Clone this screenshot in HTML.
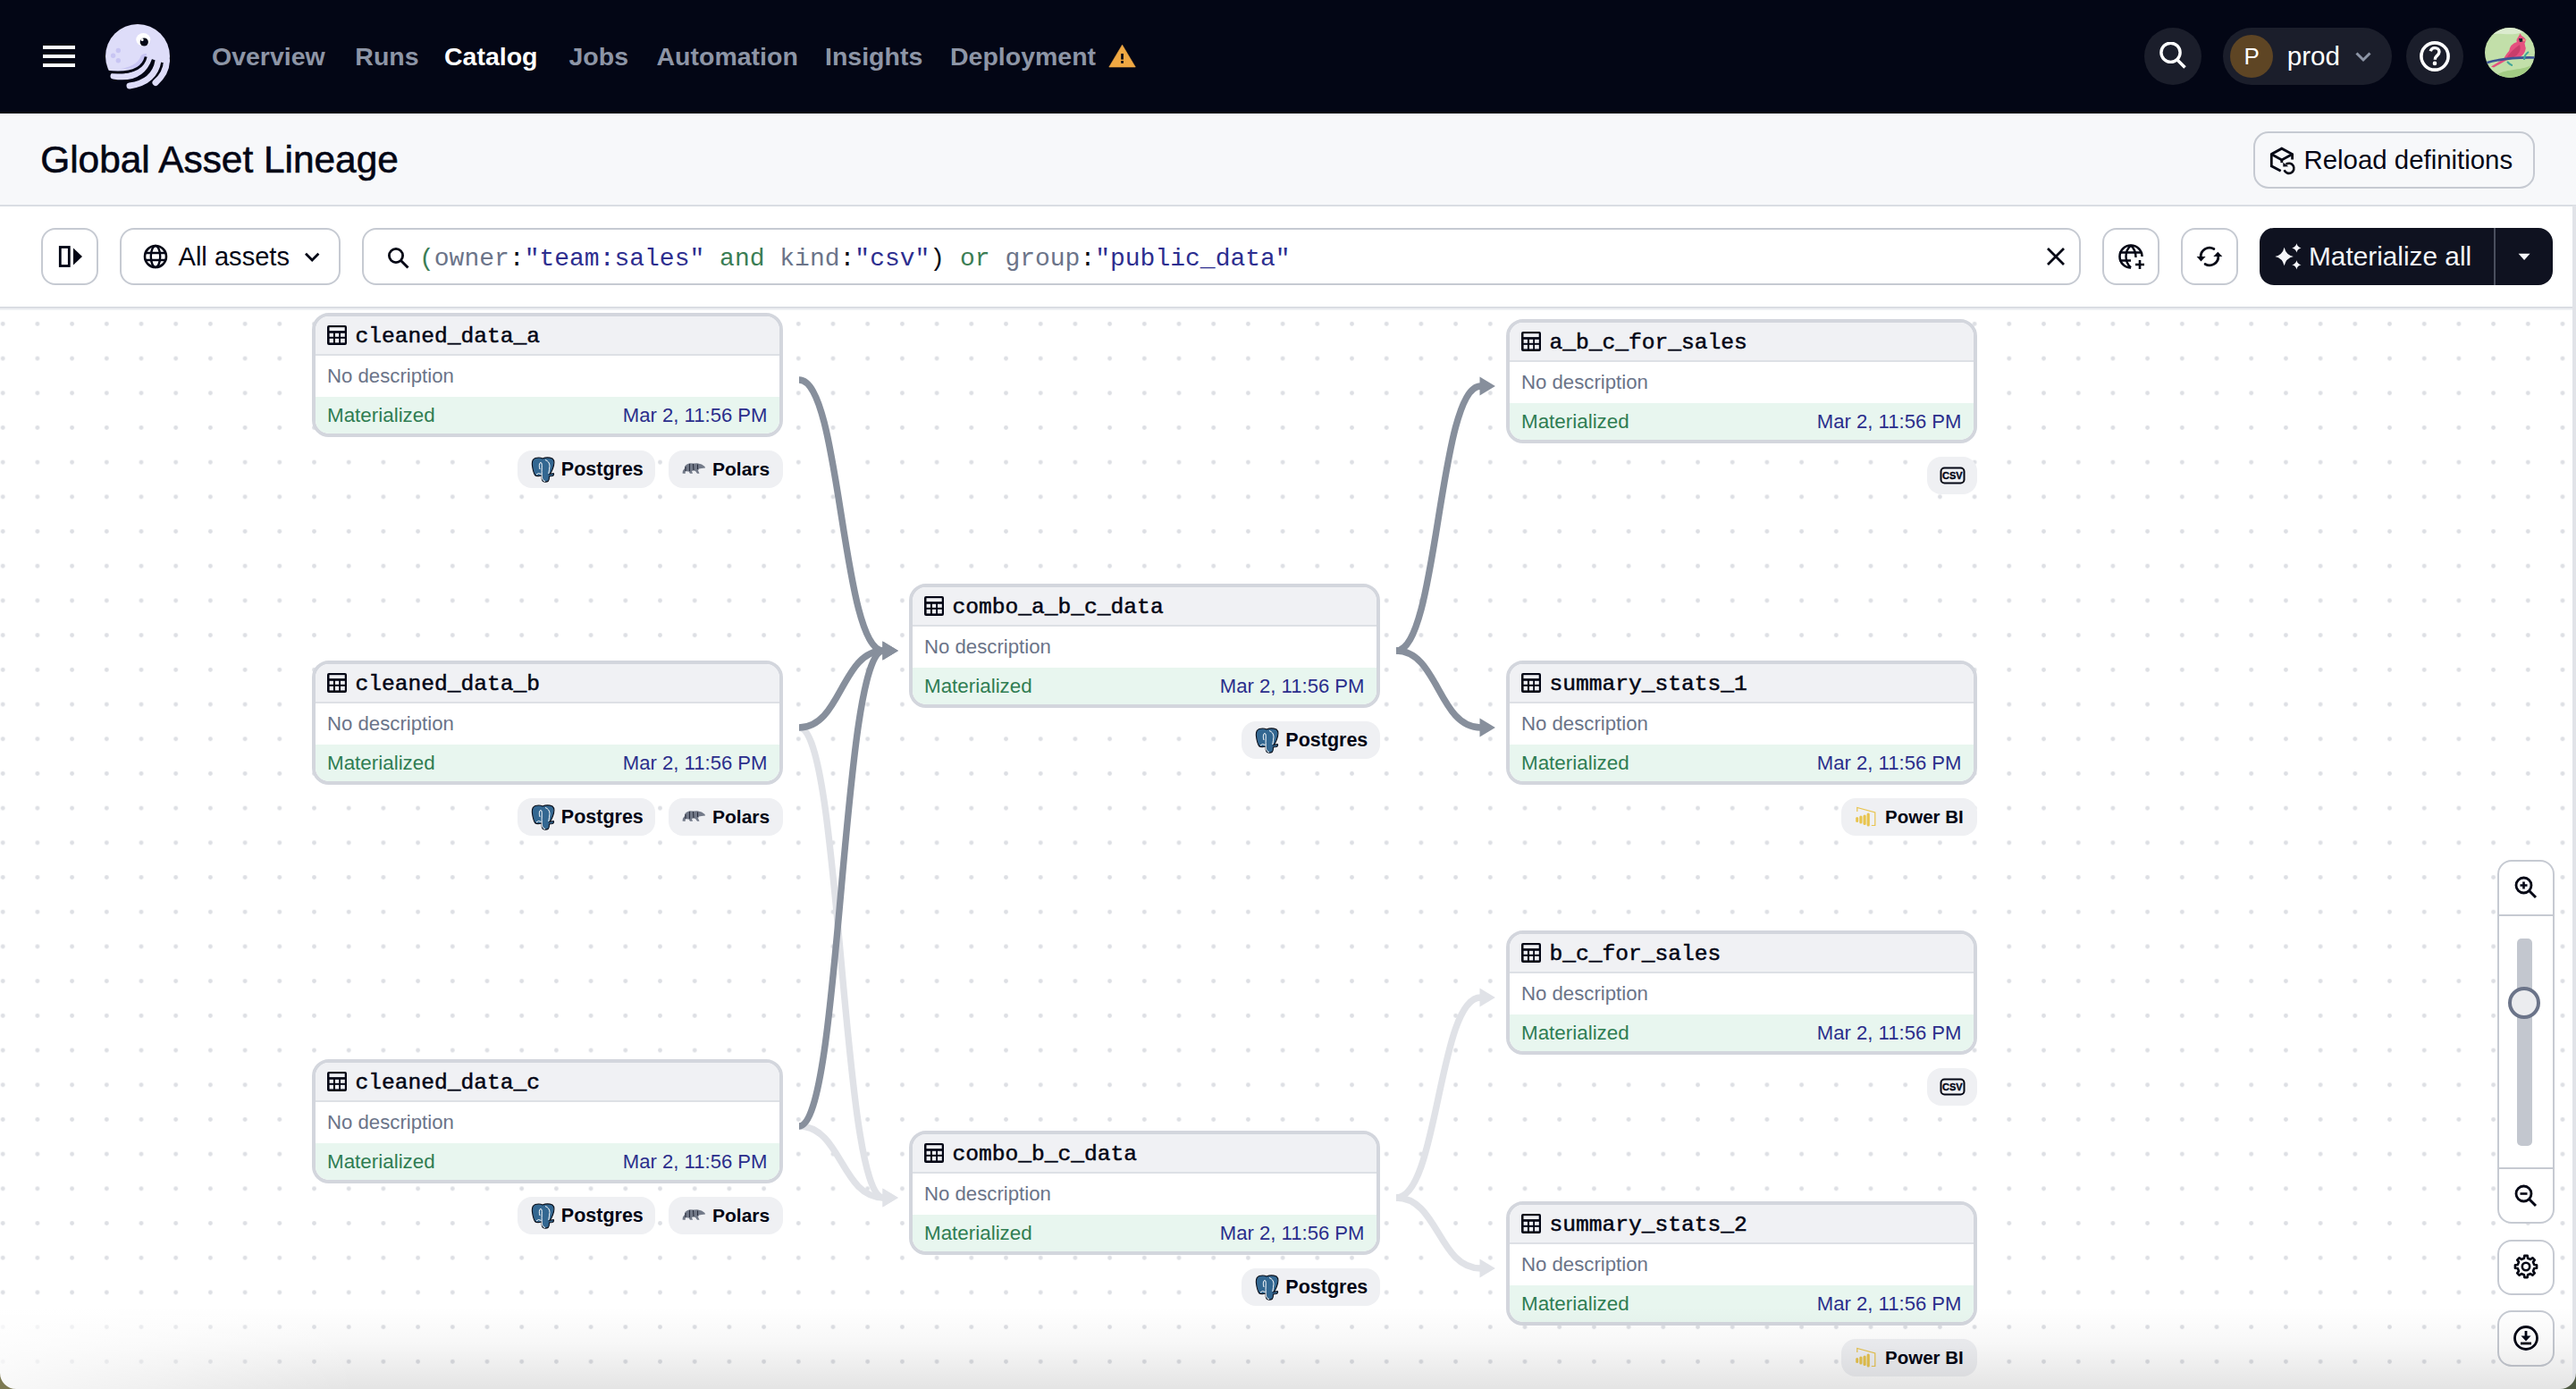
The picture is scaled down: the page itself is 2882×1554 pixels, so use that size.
<!DOCTYPE html><html><head><meta charset="utf-8"><title>Global Asset Lineage</title><style>
html,body{margin:0;padding:0;}
body{width:2882px;height:1554px;overflow:hidden;position:relative;background:#fff;font-family:"Liberation Sans", sans-serif;}
.t{position:absolute;white-space:pre;}
</style></head><body>
<div style="position:absolute;left:0px;top:0px;width:2882px;height:127px;box-sizing:border-box;background:#030615;"></div>
<div style="position:absolute;left:48px;top:51px;width:36px;height:4px;box-sizing:border-box;background:#fff;"></div>
<div style="position:absolute;left:48px;top:61px;width:36px;height:4px;box-sizing:border-box;background:#fff;"></div>
<div style="position:absolute;left:48px;top:71px;width:36px;height:4px;box-sizing:border-box;background:#fff;"></div>
<svg style="position:absolute;left:110px;top:20px;" width="90" height="85" viewBox="0 0 90 85">
<defs><clipPath id="hc"><path d="M0,0 H90 V50 L71.5,50 L62.5,47 L52.8,43.5 Q51.5,63 12,60.2 L0,60.2 Z"/></clipPath></defs>
<circle cx="44" cy="43" r="36" fill="#DEDDF9" clip-path="url(#hc)"/>
<path d="M54,40 C53,52 45,57 24,57.5 C36,55 44,51 47,44 C48,41 50,40 54,40 Z" fill="#C8C5F3" clip-path="url(#hc)"/>
<path d="M17,65 Q48,70 57,44" stroke="#DEDDF9" stroke-width="7" fill="none" stroke-linecap="round"/>
<path d="M35,76 Q63,72 67,48" stroke="#DEDDF9" stroke-width="7" fill="none" stroke-linecap="round"/>
<path d="M64,72.5 Q76,62 76.5,48" stroke="#DEDDF9" stroke-width="7" fill="none" stroke-linecap="round"/>
<path d="M10,60.3 Q48.5,64.5 53.2,43.5" stroke="#030615" stroke-width="3" fill="none"/>
<ellipse cx="50.3" cy="24.3" rx="8" ry="7.3" fill="#fff"/>
<circle cx="51.3" cy="27" r="4.6" fill="#030615"/>
<circle cx="49.1" cy="24.6" r="1.5" fill="#fff"/>
<circle cx="22.3" cy="36.5" r="2.7" fill="#C8C5F3"/>
<circle cx="16.6" cy="42.2" r="2.7" fill="#C8C5F3"/>
<circle cx="22.3" cy="47.7" r="2.7" fill="#C8C5F3"/>
</svg>
<div class="t" style="left:237.00px;top:49.05px;font-size:28.5px;line-height:28.5px;font-family:'Liberation Sans', sans-serif;font-weight:700;color:#8D95A6;">Overview</div>
<div class="t" style="left:397.30px;top:49.05px;font-size:28.5px;line-height:28.5px;font-family:'Liberation Sans', sans-serif;font-weight:700;color:#8D95A6;">Runs</div>
<div class="t" style="left:497.00px;top:49.05px;font-size:28.5px;line-height:28.5px;font-family:'Liberation Sans', sans-serif;font-weight:700;color:#FFFFFF;">Catalog</div>
<div class="t" style="left:636.50px;top:49.05px;font-size:28.5px;line-height:28.5px;font-family:'Liberation Sans', sans-serif;font-weight:700;color:#8D95A6;">Jobs</div>
<div class="t" style="left:734.50px;top:49.05px;font-size:28.5px;line-height:28.5px;font-family:'Liberation Sans', sans-serif;font-weight:700;color:#8D95A6;">Automation</div>
<div class="t" style="left:923.00px;top:49.05px;font-size:28.5px;line-height:28.5px;font-family:'Liberation Sans', sans-serif;font-weight:700;color:#8D95A6;">Insights</div>
<div class="t" style="left:1063.00px;top:49.05px;font-size:28.5px;line-height:28.5px;font-family:'Liberation Sans', sans-serif;font-weight:700;color:#8D95A6;">Deployment</div>
<svg style="position:absolute;left:1238px;top:46px;" width="36" height="32" viewBox="0 0 36 32">
<path d="M17.55,4.2 L32.3,29 L2.8,29 Z" fill="#F0A843" stroke="#F0A843" stroke-width="0.6" stroke-linejoin="round"/>
<rect x="16.2" y="14" width="2.7" height="6.6" fill="#030615"/>
<rect x="16.2" y="22" width="2.7" height="2.8" fill="#030615"/>
</svg>
<div style="position:absolute;left:2399px;top:31px;width:64px;height:64px;box-sizing:border-box;background:#1B1E2B;border-radius:50%;"></div>
<svg style="position:absolute;left:2415px;top:47px;" width="34" height="34" viewBox="0 0 34 34"><circle cx="13.5" cy="11.8" r="10.6" stroke="#fff" stroke-width="3.4" fill="none"/><path d="M20.5,19.5 L29.5,28.5" stroke="#fff" stroke-width="3.6"/></svg>
<div style="position:absolute;left:2487px;top:31px;width:189px;height:64px;box-sizing:border-box;background:#1B1E2B;border-radius:32px;"></div>
<div style="position:absolute;left:2495px;top:39px;width:48px;height:48px;box-sizing:border-box;background:#5E4524;border-radius:50%;"></div>
<div class="t" style="left:2510.60px;top:49.80px;font-size:26px;line-height:26px;font-family:'Liberation Sans', sans-serif;font-weight:400;color:#fff;">P</div>
<div class="t" style="left:2558.80px;top:47.90px;font-size:29.6px;line-height:29.6px;font-family:'Liberation Sans', sans-serif;font-weight:400;color:#fff;">prod</div>
<svg style="position:absolute;left:2632px;top:54px;" width="24" height="18" viewBox="0 0 24 18"><path d="M4.5,5.5 L12,13 L19.5,5.5" stroke="#8D95A6" stroke-width="3" fill="none"/></svg>
<div style="position:absolute;left:2692px;top:31px;width:64px;height:64px;box-sizing:border-box;background:#1B1E2B;border-radius:50%;"></div>
<svg style="position:absolute;left:2706px;top:45px;" width="36" height="36" viewBox="0 0 36 36"><circle cx="18" cy="18" r="15.1" stroke="#fff" stroke-width="3.6" fill="none"/><path d="M13.2,12.2 C14,9.6 15.8,8.6 18,8.6 C20.8,8.6 23,10.4 23,13 C23,15.6 21.2,16.8 19.8,18 C18.7,19 18.3,20 18.3,21.8" stroke="#fff" stroke-width="3.4" fill="none"/><circle cx="18" cy="25.9" r="2.3" fill="#fff"/></svg>
<svg style="position:absolute;left:2780px;top:31px;" width="56" height="56" viewBox="0 0 56 56">
<defs><clipPath id="avc"><circle cx="28" cy="28" r="28"/></clipPath></defs>
<g clip-path="url(#avc)">
<rect width="56" height="56" fill="#C2DFA9"/>
<path d="M0,10 C15,2 25,12 45,4 L56,0 L0,0 Z" fill="#DCEBCF"/>
<path d="M10,56 C20,44 40,50 56,40 L56,56 Z" fill="#A3CC84"/>

<path d="M7,43.5 L21,35 C24,29 30,22 36,17 L37.5,10 L39.5,6.5 L43,11.5 L46.5,13.5 L43.5,15.5 C46.5,21 46,28.5 40,32.5 C34,35.5 28,35 24,36.5 L10,44.5 Z" fill="#E5507F"/>
<ellipse cx="36.5" cy="24.5" rx="9.5" ry="8" fill="#E5507F" transform="rotate(-30 36.5 24.5)"/><circle cx="40.5" cy="14.5" r="5" fill="#E5507F"/><path d="M24,34 C28,28 33,23 39,19 C41,25 38,30 32,33 Z" fill="#C93D6B"/>
<path d="M38,12 L42,12 L42.5,15.5 L39,16 Z" fill="#1D2A30"/>
<path d="M42.5,12.5 L46.5,13.8 L42.5,15.5 Z" fill="#F39A85"/>
<path d="M1,39.5 C18,34.5 35,33 56,33.5" stroke="#3B5494" stroke-width="2.6" fill="none"/><path d="M44,36 C44,32 46,29 49,27" stroke="#3FA59A" stroke-width="2" fill="none"/>
<path d="M25,38 C27,40 29,42 31,42" stroke="#3FA59A" stroke-width="2" fill="none"/>
</g></svg>
<div style="position:absolute;left:0px;top:127px;width:2882px;height:104px;box-sizing:border-box;background:#F7F8FA;border-top:1px solid #fff;border-bottom:2px solid #DADDE3;"></div>
<div class="t" style="left:45.20px;top:157.50px;font-size:42.4px;line-height:42.4px;font-family:'Liberation Sans', sans-serif;font-weight:400;color:#030615;-webkit-text-stroke:0.6px #030615;">Global Asset Lineage</div>
<div style="position:absolute;left:2521px;top:147px;width:315px;height:64px;box-sizing:border-box;border:2px solid #C6CAD2;border-radius:17px;"></div>
<svg style="position:absolute;left:2538px;top:162px;" width="36" height="36" viewBox="0 0 36 36">
<path d="M13.7,29.3 L3.3,23.8 L3.3,10.5 L14.8,4.2 L26.6,10.5 L26.6,16.5" stroke="#030615" stroke-width="2.8" fill="none" stroke-linejoin="miter"/>
<path d="M3.3,10.5 L14.8,17 L26.6,10.5" stroke="#030615" stroke-width="2.8" fill="none"/>
<path d="M14.8,17 L14.8,20" stroke="#030615" stroke-width="2.8"/>
<path d="M19.5,21.8 A5.6,5.6 0 1 1 17.6,28.3" stroke="#030615" stroke-width="2.6" fill="none"/>
<path d="M16.3,19.8 L22.2,24.2 L16.3,24.6 Z" fill="#030615"/>
</svg>
<div class="t" style="left:2577.50px;top:163.70px;font-size:29.4px;line-height:29.4px;font-family:'Liberation Sans', sans-serif;font-weight:400;color:#030615;">Reload definitions</div>
<div style="position:absolute;left:0px;top:231px;width:2878px;height:114px;box-sizing:border-box;background:#fff;border-bottom:2px solid #DADDE3;"></div>
<div style="position:absolute;left:46px;top:255px;width:64px;height:64px;box-sizing:border-box;border:2px solid #C6CAD2;border-radius:16px;background:#fff;"></div>
<svg style="position:absolute;left:62px;top:271px;" width="32" height="32" viewBox="0 0 32 32"><rect x="5.3" y="5.5" width="10" height="21" stroke="#030615" stroke-width="2.8" fill="none"/><path d="M20,6.5 L30,16 L20,25.5 Z" fill="#030615"/></svg>
<div style="position:absolute;left:134px;top:255px;width:247px;height:64px;box-sizing:border-box;border:2px solid #C6CAD2;border-radius:16px;background:#fff;"></div>
<svg style="position:absolute;left:159px;top:272px;" width="30" height="30" viewBox="0 0 30 30"><circle cx="15" cy="15" r="12" stroke="#030615" stroke-width="2.6" fill="none"/>
<ellipse cx="15" cy="15" rx="5.2" ry="12" stroke="#030615" stroke-width="2.4" fill="none"/>
<path d="M3.5,11 H26.5 M3.5,19 H26.5" stroke="#030615" stroke-width="2.4"/></svg>
<div class="t" style="left:199.50px;top:272.75px;font-size:29.1px;line-height:29.1px;font-family:'Liberation Sans', sans-serif;font-weight:400;color:#030615;">All assets</div>
<svg style="position:absolute;left:336px;top:278px;" width="26" height="20" viewBox="0 0 26 20"><path d="M6,5.8 L13.2,13 L20.4,5.8" stroke="#030615" stroke-width="2.8" fill="none"/></svg>
<div style="position:absolute;left:405px;top:255px;width:1923px;height:64px;box-sizing:border-box;border:2px solid #C6CAD2;border-radius:16px;background:#fff;"></div>
<svg style="position:absolute;left:429.5px;top:273px;" width="32" height="32" viewBox="0 0 32 32"><circle cx="13" cy="13" r="7.6" stroke="#030615" stroke-width="2.8" fill="none"/><path d="M18.5,18.5 L26.5,26.5" stroke="#030615" stroke-width="3"/></svg>
<div class="t" style="left:469.00px;top:276.00px;font-size:28px;line-height:28px;font-family:'Liberation Mono', monospace;font-weight:400;color:#030615;"><span style="color:#3A7D54">(</span><span style="color:#6B7489">owner</span><span style="color:#030615">:</span><span style="color:#2D2E8F">"team:sales"</span><span style="color:#3A7D54"> and </span><span style="color:#6B7489">kind</span><span style="color:#030615">:</span><span style="color:#2D2E8F">"csv"</span><span style="color:#030615">)</span><span style="color:#3A7D54"> or </span><span style="color:#6B7489">group</span><span style="color:#030615">:</span><span style="color:#2D2E8F">"public_data"</span></div>
<svg style="position:absolute;left:2286px;top:273px;" width="28" height="28" viewBox="0 0 28 28"><path d="M5,5 L23,23 M23,5 L5,23" stroke="#030615" stroke-width="2.8"/></svg>
<div style="position:absolute;left:2352px;top:255px;width:64px;height:64px;box-sizing:border-box;border:2px solid #C6CAD2;border-radius:16px;background:#fff;"></div>
<svg style="position:absolute;left:2367px;top:270px;" width="34" height="34" viewBox="0 0 34 34"><path d="M17,29.5 A12.5,12.5 0 1 1 29.5,17" stroke="#030615" stroke-width="2.6" fill="none"/>
<path d="M17,4.5 C12,9 11.5,14 11.5,17 C11.5,21 13,26 17,29.5" stroke="#030615" stroke-width="2.4" fill="none"/>
<path d="M17,4.5 C22,9 22.5,14 22.5,18" stroke="#030615" stroke-width="2.4" fill="none"/>
<path d="M4.5,12.5 H29 M4.5,21.5 H17" stroke="#030615" stroke-width="2.4"/>
<path d="M27,21 V31 M22,26 H32" stroke="#030615" stroke-width="2.6"/></svg>
<div style="position:absolute;left:2440px;top:255px;width:64px;height:64px;box-sizing:border-box;border:2px solid #C6CAD2;border-radius:16px;background:#fff;"></div>
<svg style="position:absolute;left:2455px;top:270px;" width="34" height="34" viewBox="0 0 34 34"><path d="M7.2,17.5 A9.8,9.8 0 0 1 21.9,8.5" stroke="#030615" stroke-width="2.8" fill="none" stroke-linecap="round"/>
<path d="M26.8,16.5 A9.8,9.8 0 0 1 12.1,25.5" stroke="#030615" stroke-width="2.8" fill="none" stroke-linecap="round"/>
<path d="M2.6,17 L12.6,17 L7.5,22.5 Z" fill="#030615"/>
<path d="M21.3,17 L31.3,17 L26.3,11.7 Z" fill="#030615"/></svg>
<div style="position:absolute;left:2528px;top:255px;width:328px;height:64px;box-sizing:border-box;background:#0F1220;border-radius:16px;"></div>
<div style="position:absolute;left:2790px;top:255px;width:2px;height:64px;box-sizing:border-box;background:#4A4F5E;"></div>
<svg style="position:absolute;left:2540px;top:268px;" width="40" height="38" viewBox="0 0 40 38"><path d="M15.6,8.7 Q17.454,17.146 25.9,19 Q17.454,20.854 15.6,29.3 Q13.745999999999999,20.854 5.299999999999999,19 Q13.745999999999999,17.146 15.6,8.7 Z" fill="#F4F5F8"/><path d="M29.4,4.300000000000001 Q30.317999999999998,8.482000000000001 34.5,9.4 Q30.317999999999998,10.318 29.4,14.5 Q28.482,10.318 24.299999999999997,9.4 Q28.482,8.482000000000001 29.4,4.300000000000001 Z" fill="#F4F5F8"/><path d="M29.4,23.200000000000003 Q30.317999999999998,27.382 34.5,28.3 Q30.317999999999998,29.218 29.4,33.4 Q28.482,29.218 24.299999999999997,28.3 Q28.482,27.382 29.4,23.200000000000003 Z" fill="#F4F5F8"/></svg>
<div class="t" style="left:2583.00px;top:272.00px;font-size:29.8px;line-height:29.8px;font-family:'Liberation Sans', sans-serif;font-weight:400;color:#F4F5F8;">Materialize all</div>
<svg style="position:absolute;left:2814px;top:280px;" width="20" height="16" viewBox="0 0 20 16"><path d="M3.6,3.8 L16.6,3.8 L10.1,11 Z" fill="#F4F5F8"/></svg>
<div style="position:absolute;left:0px;top:345px;width:2878px;height:2px;box-sizing:border-box;background:#EEF0F3;"></div>
<div style="position:absolute;left:2878px;top:230px;width:4px;height:1324px;box-sizing:border-box;background:#E1E3E8;"></div>
<svg style="position:absolute;left:0;top:345px" width="2878" height="1209">
<defs><pattern id="dots" x="-16.15" y="-2.00" width="38.7" height="38.7" patternUnits="userSpaceOnUse">
<circle cx="19.35" cy="19.35" r="2.45" fill="#DDDFE4"/></pattern></defs>
<rect width="2878" height="1209" fill="url(#dots)"/></svg>
<svg style="position:absolute;left:0;top:0" width="2882" height="1554"><path d="M894.0,814.0 C941.2,814.0 941.2,1340.0 988.5,1340.0" stroke="#E0E2E7" stroke-width="7.4" fill="none"/><path d="M987.5,1329.5 L1004.9,1340.0 L987.5,1350.5 Z" fill="#E0E2E7"/><path d="M894.0,1260.0 C941.2,1260.0 941.2,1340.0 988.5,1340.0" stroke="#E0E2E7" stroke-width="7.4" fill="none"/><path d="M987.5,1329.5 L1004.9,1340.0 L987.5,1350.5 Z" fill="#E0E2E7"/><path d="M1562.0,1340.0 C1609.2,1340.0 1609.2,1116.0 1656.5,1116.0" stroke="#E0E2E7" stroke-width="7.4" fill="none"/><path d="M1655.5,1105.5 L1672.9,1116.0 L1655.5,1126.5 Z" fill="#E0E2E7"/><path d="M1562.0,1340.0 C1609.2,1340.0 1609.2,1419.0 1656.5,1419.0" stroke="#E0E2E7" stroke-width="7.4" fill="none"/><path d="M1655.5,1408.5 L1672.9,1419.0 L1655.5,1429.5 Z" fill="#E0E2E7"/><path d="M894.0,425.0 C941.2,425.0 941.2,728.0 988.5,728.0" stroke="#878F9C" stroke-width="7.4" fill="none"/><path d="M987.5,717.5 L1004.9,728.0 L987.5,738.5 Z" fill="#878F9C"/><path d="M894.0,814.0 C941.2,814.0 941.2,728.0 988.5,728.0" stroke="#878F9C" stroke-width="7.4" fill="none"/><path d="M987.5,717.5 L1004.9,728.0 L987.5,738.5 Z" fill="#878F9C"/><path d="M894.0,1260.0 C941.2,1260.0 941.2,728.0 988.5,728.0" stroke="#878F9C" stroke-width="7.4" fill="none"/><path d="M987.5,717.5 L1004.9,728.0 L987.5,738.5 Z" fill="#878F9C"/><path d="M1562.0,728.0 C1609.2,728.0 1609.2,432.0 1656.5,432.0" stroke="#878F9C" stroke-width="7.4" fill="none"/><path d="M1655.5,421.5 L1672.9,432.0 L1655.5,442.5 Z" fill="#878F9C"/><path d="M1562.0,728.0 C1609.2,728.0 1609.2,814.0 1656.5,814.0" stroke="#878F9C" stroke-width="7.4" fill="none"/><path d="M1655.5,803.5 L1672.9,814.0 L1655.5,824.5 Z" fill="#878F9C"/></svg>
<div style="position:absolute;left:349px;top:350px;width:527px;height:139px;box-sizing:border-box;border:4px solid #D3D6DD;border-radius:19px;overflow:hidden;background:#fff;"><div style="position:absolute;left:0;top:0;right:0;height:42px;background:#F0F1F4;border-bottom:2px solid #DDE0E5;"></div><div style="position:absolute;left:0;top:90px;right:0;height:41px;background:#E8F6EF;"></div></div>
<svg style="position:absolute;left:366.3px;top:363.8px;" width="22" height="22" viewBox="0 0 22 22"><rect x="0" y="0" width="22" height="22" rx="2" fill="#030615"/>
<rect x="2.5" y="2.2" width="17.2" height="3.9" fill="#F0F1F4"/>
<rect x="2.6" y="8.8" width="4.3" height="4" fill="#F0F1F4"/><rect x="9" y="8.8" width="4.2" height="4" fill="#F0F1F4"/><rect x="15" y="8.8" width="4.8" height="4" fill="#F0F1F4"/>
<rect x="2.6" y="14.8" width="4.3" height="4.6" fill="#F0F1F4"/><rect x="9" y="14.8" width="4.2" height="4.6" fill="#F0F1F4"/><rect x="15" y="14.8" width="4.8" height="4.6" fill="#F0F1F4"/></svg>
<div class="t" style="left:397.50px;top:364.90px;font-size:24.6px;line-height:24.6px;font-family:'Liberation Mono', monospace;font-weight:400;color:#030615;-webkit-text-stroke:0.5px #030615;">cleaned_data_a</div>
<div class="t" style="left:366.00px;top:410.40px;font-size:22.2px;line-height:22.2px;font-family:'Liberation Sans', sans-serif;font-weight:400;color:#6B7489;">No description</div>
<div class="t" style="left:366.00px;top:454.10px;font-size:22.4px;line-height:22.4px;font-family:'Liberation Sans', sans-serif;font-weight:400;color:#2F7D52;">Materialized</div>
<div class="t" style="right:2023.50px;top:454.25px;font-size:22.1px;line-height:22.1px;font-family:'Liberation Sans', sans-serif;font-weight:400;color:#2B2E8C;">Mar 2, 11:56 PM</div>
<div style="position:absolute;left:748px;top:504px;width:128px;height:41.5px;box-sizing:border-box;background:#EFF0F3;border-radius:16px;"></div>
<svg style="position:absolute;left:762.8px;top:517.9px;" width="28" height="14" viewBox="0 0 28 14"><path d="M0.5,11.5 L1,8.5 L3,6 L3.5,3 L5.5,1.5 L8.5,0.3 L13,0.5 L17,0.3 L22,1.5 L25.5,4 L26,5.5 L22,6 L19,6.5 L18,8.5 L19.5,11.8 L17,11.8 L15,9 L13,8.5 L11,9 L12,11.8 L9,11.8 L7.5,9.5 L4,9.3 L3.5,12 Z" fill="#737A89"/>
<path d="M8.5,1 L8.5,9 M12.5,1 L13,8 M17.5,1.5 L17.5,7 M4,4 L4,9" stroke="#2A2F3E" stroke-width="1.1"/></svg>
<div class="t" style="left:797.00px;top:514.40px;font-size:21px;line-height:21px;font-family:'Liberation Sans', sans-serif;font-weight:700;color:#030615;">Polars</div>
<div style="position:absolute;left:578.8px;top:504px;width:154.7px;height:41.5px;box-sizing:border-box;background:#EFF0F3;border-radius:16px;"></div>
<svg style="position:absolute;left:592.8px;top:510.5px;" width="28" height="29" viewBox="0 0 28 29"><path d="M6,1.5 C9,0.8 12,1 14,2 C17,0.8 22,0.8 25,2 C27.5,4 27,9 25.5,13 C24.5,16 23.5,18 22,19.5 L26,18.5 C27,19 26.5,21 25,21.5 L21.5,22 C21.5,24 21.5,26 20.5,27 C19,28.5 15,28.5 14,27 C13,25 13,23 13,21 C11,21.5 7,22 5.5,20.5 C4,18 3,14 2.5,10 C2,6 3,2.5 6,1.5 Z" fill="#336791" stroke="#0B0F1A" stroke-width="1.1"/>
<path d="M11,14 C10,11 10,8 11.5,6.5 C13,5.5 13.5,9 13.2,12 C13,15 13.2,18 13.2,21 C13.2,24 14,27 17,27.5 M17,3.5 C20,4.5 22,7 22,10.5 C22,13.5 21,16 20.8,19 M7,20 L9.5,18.5 L12.5,19.5" stroke="#fff" stroke-width="1" fill="none"/></svg>
<div class="t" style="left:627.80px;top:514.65px;font-size:21.5px;line-height:21.5px;font-family:'Liberation Sans', sans-serif;font-weight:700;color:#030615;">Postgres</div>
<div style="position:absolute;left:349px;top:739px;width:527px;height:139px;box-sizing:border-box;border:4px solid #D3D6DD;border-radius:19px;overflow:hidden;background:#fff;"><div style="position:absolute;left:0;top:0;right:0;height:42px;background:#F0F1F4;border-bottom:2px solid #DDE0E5;"></div><div style="position:absolute;left:0;top:90px;right:0;height:41px;background:#E8F6EF;"></div></div>
<svg style="position:absolute;left:366.3px;top:752.8px;" width="22" height="22" viewBox="0 0 22 22"><rect x="0" y="0" width="22" height="22" rx="2" fill="#030615"/>
<rect x="2.5" y="2.2" width="17.2" height="3.9" fill="#F0F1F4"/>
<rect x="2.6" y="8.8" width="4.3" height="4" fill="#F0F1F4"/><rect x="9" y="8.8" width="4.2" height="4" fill="#F0F1F4"/><rect x="15" y="8.8" width="4.8" height="4" fill="#F0F1F4"/>
<rect x="2.6" y="14.8" width="4.3" height="4.6" fill="#F0F1F4"/><rect x="9" y="14.8" width="4.2" height="4.6" fill="#F0F1F4"/><rect x="15" y="14.8" width="4.8" height="4.6" fill="#F0F1F4"/></svg>
<div class="t" style="left:397.50px;top:753.90px;font-size:24.6px;line-height:24.6px;font-family:'Liberation Mono', monospace;font-weight:400;color:#030615;-webkit-text-stroke:0.5px #030615;">cleaned_data_b</div>
<div class="t" style="left:366.00px;top:799.40px;font-size:22.2px;line-height:22.2px;font-family:'Liberation Sans', sans-serif;font-weight:400;color:#6B7489;">No description</div>
<div class="t" style="left:366.00px;top:843.10px;font-size:22.4px;line-height:22.4px;font-family:'Liberation Sans', sans-serif;font-weight:400;color:#2F7D52;">Materialized</div>
<div class="t" style="right:2023.50px;top:843.25px;font-size:22.1px;line-height:22.1px;font-family:'Liberation Sans', sans-serif;font-weight:400;color:#2B2E8C;">Mar 2, 11:56 PM</div>
<div style="position:absolute;left:748px;top:893px;width:128px;height:41.5px;box-sizing:border-box;background:#EFF0F3;border-radius:16px;"></div>
<svg style="position:absolute;left:762.8px;top:906.9px;" width="28" height="14" viewBox="0 0 28 14"><path d="M0.5,11.5 L1,8.5 L3,6 L3.5,3 L5.5,1.5 L8.5,0.3 L13,0.5 L17,0.3 L22,1.5 L25.5,4 L26,5.5 L22,6 L19,6.5 L18,8.5 L19.5,11.8 L17,11.8 L15,9 L13,8.5 L11,9 L12,11.8 L9,11.8 L7.5,9.5 L4,9.3 L3.5,12 Z" fill="#737A89"/>
<path d="M8.5,1 L8.5,9 M12.5,1 L13,8 M17.5,1.5 L17.5,7 M4,4 L4,9" stroke="#2A2F3E" stroke-width="1.1"/></svg>
<div class="t" style="left:797.00px;top:903.40px;font-size:21px;line-height:21px;font-family:'Liberation Sans', sans-serif;font-weight:700;color:#030615;">Polars</div>
<div style="position:absolute;left:578.8px;top:893px;width:154.7px;height:41.5px;box-sizing:border-box;background:#EFF0F3;border-radius:16px;"></div>
<svg style="position:absolute;left:592.8px;top:899.5px;" width="28" height="29" viewBox="0 0 28 29"><path d="M6,1.5 C9,0.8 12,1 14,2 C17,0.8 22,0.8 25,2 C27.5,4 27,9 25.5,13 C24.5,16 23.5,18 22,19.5 L26,18.5 C27,19 26.5,21 25,21.5 L21.5,22 C21.5,24 21.5,26 20.5,27 C19,28.5 15,28.5 14,27 C13,25 13,23 13,21 C11,21.5 7,22 5.5,20.5 C4,18 3,14 2.5,10 C2,6 3,2.5 6,1.5 Z" fill="#336791" stroke="#0B0F1A" stroke-width="1.1"/>
<path d="M11,14 C10,11 10,8 11.5,6.5 C13,5.5 13.5,9 13.2,12 C13,15 13.2,18 13.2,21 C13.2,24 14,27 17,27.5 M17,3.5 C20,4.5 22,7 22,10.5 C22,13.5 21,16 20.8,19 M7,20 L9.5,18.5 L12.5,19.5" stroke="#fff" stroke-width="1" fill="none"/></svg>
<div class="t" style="left:627.80px;top:903.65px;font-size:21.5px;line-height:21.5px;font-family:'Liberation Sans', sans-serif;font-weight:700;color:#030615;">Postgres</div>
<div style="position:absolute;left:349px;top:1185px;width:527px;height:139px;box-sizing:border-box;border:4px solid #D3D6DD;border-radius:19px;overflow:hidden;background:#fff;"><div style="position:absolute;left:0;top:0;right:0;height:42px;background:#F0F1F4;border-bottom:2px solid #DDE0E5;"></div><div style="position:absolute;left:0;top:90px;right:0;height:41px;background:#E8F6EF;"></div></div>
<svg style="position:absolute;left:366.3px;top:1198.8px;" width="22" height="22" viewBox="0 0 22 22"><rect x="0" y="0" width="22" height="22" rx="2" fill="#030615"/>
<rect x="2.5" y="2.2" width="17.2" height="3.9" fill="#F0F1F4"/>
<rect x="2.6" y="8.8" width="4.3" height="4" fill="#F0F1F4"/><rect x="9" y="8.8" width="4.2" height="4" fill="#F0F1F4"/><rect x="15" y="8.8" width="4.8" height="4" fill="#F0F1F4"/>
<rect x="2.6" y="14.8" width="4.3" height="4.6" fill="#F0F1F4"/><rect x="9" y="14.8" width="4.2" height="4.6" fill="#F0F1F4"/><rect x="15" y="14.8" width="4.8" height="4.6" fill="#F0F1F4"/></svg>
<div class="t" style="left:397.50px;top:1199.90px;font-size:24.6px;line-height:24.6px;font-family:'Liberation Mono', monospace;font-weight:400;color:#030615;-webkit-text-stroke:0.5px #030615;">cleaned_data_c</div>
<div class="t" style="left:366.00px;top:1245.40px;font-size:22.2px;line-height:22.2px;font-family:'Liberation Sans', sans-serif;font-weight:400;color:#6B7489;">No description</div>
<div class="t" style="left:366.00px;top:1289.10px;font-size:22.4px;line-height:22.4px;font-family:'Liberation Sans', sans-serif;font-weight:400;color:#2F7D52;">Materialized</div>
<div class="t" style="right:2023.50px;top:1289.25px;font-size:22.1px;line-height:22.1px;font-family:'Liberation Sans', sans-serif;font-weight:400;color:#2B2E8C;">Mar 2, 11:56 PM</div>
<div style="position:absolute;left:748px;top:1339px;width:128px;height:41.5px;box-sizing:border-box;background:#EFF0F3;border-radius:16px;"></div>
<svg style="position:absolute;left:762.8px;top:1352.9px;" width="28" height="14" viewBox="0 0 28 14"><path d="M0.5,11.5 L1,8.5 L3,6 L3.5,3 L5.5,1.5 L8.5,0.3 L13,0.5 L17,0.3 L22,1.5 L25.5,4 L26,5.5 L22,6 L19,6.5 L18,8.5 L19.5,11.8 L17,11.8 L15,9 L13,8.5 L11,9 L12,11.8 L9,11.8 L7.5,9.5 L4,9.3 L3.5,12 Z" fill="#737A89"/>
<path d="M8.5,1 L8.5,9 M12.5,1 L13,8 M17.5,1.5 L17.5,7 M4,4 L4,9" stroke="#2A2F3E" stroke-width="1.1"/></svg>
<div class="t" style="left:797.00px;top:1349.40px;font-size:21px;line-height:21px;font-family:'Liberation Sans', sans-serif;font-weight:700;color:#030615;">Polars</div>
<div style="position:absolute;left:578.8px;top:1339px;width:154.7px;height:41.5px;box-sizing:border-box;background:#EFF0F3;border-radius:16px;"></div>
<svg style="position:absolute;left:592.8px;top:1345.5px;" width="28" height="29" viewBox="0 0 28 29"><path d="M6,1.5 C9,0.8 12,1 14,2 C17,0.8 22,0.8 25,2 C27.5,4 27,9 25.5,13 C24.5,16 23.5,18 22,19.5 L26,18.5 C27,19 26.5,21 25,21.5 L21.5,22 C21.5,24 21.5,26 20.5,27 C19,28.5 15,28.5 14,27 C13,25 13,23 13,21 C11,21.5 7,22 5.5,20.5 C4,18 3,14 2.5,10 C2,6 3,2.5 6,1.5 Z" fill="#336791" stroke="#0B0F1A" stroke-width="1.1"/>
<path d="M11,14 C10,11 10,8 11.5,6.5 C13,5.5 13.5,9 13.2,12 C13,15 13.2,18 13.2,21 C13.2,24 14,27 17,27.5 M17,3.5 C20,4.5 22,7 22,10.5 C22,13.5 21,16 20.8,19 M7,20 L9.5,18.5 L12.5,19.5" stroke="#fff" stroke-width="1" fill="none"/></svg>
<div class="t" style="left:627.80px;top:1349.65px;font-size:21.5px;line-height:21.5px;font-family:'Liberation Sans', sans-serif;font-weight:700;color:#030615;">Postgres</div>
<div style="position:absolute;left:1017px;top:653px;width:527px;height:139px;box-sizing:border-box;border:4px solid #D3D6DD;border-radius:19px;overflow:hidden;background:#fff;"><div style="position:absolute;left:0;top:0;right:0;height:42px;background:#F0F1F4;border-bottom:2px solid #DDE0E5;"></div><div style="position:absolute;left:0;top:90px;right:0;height:41px;background:#E8F6EF;"></div></div>
<svg style="position:absolute;left:1034.3px;top:666.8px;" width="22" height="22" viewBox="0 0 22 22"><rect x="0" y="0" width="22" height="22" rx="2" fill="#030615"/>
<rect x="2.5" y="2.2" width="17.2" height="3.9" fill="#F0F1F4"/>
<rect x="2.6" y="8.8" width="4.3" height="4" fill="#F0F1F4"/><rect x="9" y="8.8" width="4.2" height="4" fill="#F0F1F4"/><rect x="15" y="8.8" width="4.8" height="4" fill="#F0F1F4"/>
<rect x="2.6" y="14.8" width="4.3" height="4.6" fill="#F0F1F4"/><rect x="9" y="14.8" width="4.2" height="4.6" fill="#F0F1F4"/><rect x="15" y="14.8" width="4.8" height="4.6" fill="#F0F1F4"/></svg>
<div class="t" style="left:1065.50px;top:667.90px;font-size:24.6px;line-height:24.6px;font-family:'Liberation Mono', monospace;font-weight:400;color:#030615;-webkit-text-stroke:0.5px #030615;">combo_a_b_c_data</div>
<div class="t" style="left:1034.00px;top:713.40px;font-size:22.2px;line-height:22.2px;font-family:'Liberation Sans', sans-serif;font-weight:400;color:#6B7489;">No description</div>
<div class="t" style="left:1034.00px;top:757.10px;font-size:22.4px;line-height:22.4px;font-family:'Liberation Sans', sans-serif;font-weight:400;color:#2F7D52;">Materialized</div>
<div class="t" style="right:1355.50px;top:757.25px;font-size:22.1px;line-height:22.1px;font-family:'Liberation Sans', sans-serif;font-weight:400;color:#2B2E8C;">Mar 2, 11:56 PM</div>
<div style="position:absolute;left:1389.3px;top:807px;width:154.7px;height:41.5px;box-sizing:border-box;background:#EFF0F3;border-radius:16px;"></div>
<svg style="position:absolute;left:1403.3px;top:813.5px;" width="28" height="29" viewBox="0 0 28 29"><path d="M6,1.5 C9,0.8 12,1 14,2 C17,0.8 22,0.8 25,2 C27.5,4 27,9 25.5,13 C24.5,16 23.5,18 22,19.5 L26,18.5 C27,19 26.5,21 25,21.5 L21.5,22 C21.5,24 21.5,26 20.5,27 C19,28.5 15,28.5 14,27 C13,25 13,23 13,21 C11,21.5 7,22 5.5,20.5 C4,18 3,14 2.5,10 C2,6 3,2.5 6,1.5 Z" fill="#336791" stroke="#0B0F1A" stroke-width="1.1"/>
<path d="M11,14 C10,11 10,8 11.5,6.5 C13,5.5 13.5,9 13.2,12 C13,15 13.2,18 13.2,21 C13.2,24 14,27 17,27.5 M17,3.5 C20,4.5 22,7 22,10.5 C22,13.5 21,16 20.8,19 M7,20 L9.5,18.5 L12.5,19.5" stroke="#fff" stroke-width="1" fill="none"/></svg>
<div class="t" style="left:1438.30px;top:817.65px;font-size:21.5px;line-height:21.5px;font-family:'Liberation Sans', sans-serif;font-weight:700;color:#030615;">Postgres</div>
<div style="position:absolute;left:1017px;top:1265px;width:527px;height:139px;box-sizing:border-box;border:4px solid #D3D6DD;border-radius:19px;overflow:hidden;background:#fff;"><div style="position:absolute;left:0;top:0;right:0;height:42px;background:#F0F1F4;border-bottom:2px solid #DDE0E5;"></div><div style="position:absolute;left:0;top:90px;right:0;height:41px;background:#E8F6EF;"></div></div>
<svg style="position:absolute;left:1034.3px;top:1278.8px;" width="22" height="22" viewBox="0 0 22 22"><rect x="0" y="0" width="22" height="22" rx="2" fill="#030615"/>
<rect x="2.5" y="2.2" width="17.2" height="3.9" fill="#F0F1F4"/>
<rect x="2.6" y="8.8" width="4.3" height="4" fill="#F0F1F4"/><rect x="9" y="8.8" width="4.2" height="4" fill="#F0F1F4"/><rect x="15" y="8.8" width="4.8" height="4" fill="#F0F1F4"/>
<rect x="2.6" y="14.8" width="4.3" height="4.6" fill="#F0F1F4"/><rect x="9" y="14.8" width="4.2" height="4.6" fill="#F0F1F4"/><rect x="15" y="14.8" width="4.8" height="4.6" fill="#F0F1F4"/></svg>
<div class="t" style="left:1065.50px;top:1279.90px;font-size:24.6px;line-height:24.6px;font-family:'Liberation Mono', monospace;font-weight:400;color:#030615;-webkit-text-stroke:0.5px #030615;">combo_b_c_data</div>
<div class="t" style="left:1034.00px;top:1325.40px;font-size:22.2px;line-height:22.2px;font-family:'Liberation Sans', sans-serif;font-weight:400;color:#6B7489;">No description</div>
<div class="t" style="left:1034.00px;top:1369.10px;font-size:22.4px;line-height:22.4px;font-family:'Liberation Sans', sans-serif;font-weight:400;color:#2F7D52;">Materialized</div>
<div class="t" style="right:1355.50px;top:1369.25px;font-size:22.1px;line-height:22.1px;font-family:'Liberation Sans', sans-serif;font-weight:400;color:#2B2E8C;">Mar 2, 11:56 PM</div>
<div style="position:absolute;left:1389.3px;top:1419px;width:154.7px;height:41.5px;box-sizing:border-box;background:#EFF0F3;border-radius:16px;"></div>
<svg style="position:absolute;left:1403.3px;top:1425.5px;" width="28" height="29" viewBox="0 0 28 29"><path d="M6,1.5 C9,0.8 12,1 14,2 C17,0.8 22,0.8 25,2 C27.5,4 27,9 25.5,13 C24.5,16 23.5,18 22,19.5 L26,18.5 C27,19 26.5,21 25,21.5 L21.5,22 C21.5,24 21.5,26 20.5,27 C19,28.5 15,28.5 14,27 C13,25 13,23 13,21 C11,21.5 7,22 5.5,20.5 C4,18 3,14 2.5,10 C2,6 3,2.5 6,1.5 Z" fill="#336791" stroke="#0B0F1A" stroke-width="1.1"/>
<path d="M11,14 C10,11 10,8 11.5,6.5 C13,5.5 13.5,9 13.2,12 C13,15 13.2,18 13.2,21 C13.2,24 14,27 17,27.5 M17,3.5 C20,4.5 22,7 22,10.5 C22,13.5 21,16 20.8,19 M7,20 L9.5,18.5 L12.5,19.5" stroke="#fff" stroke-width="1" fill="none"/></svg>
<div class="t" style="left:1438.30px;top:1429.65px;font-size:21.5px;line-height:21.5px;font-family:'Liberation Sans', sans-serif;font-weight:700;color:#030615;">Postgres</div>
<div style="position:absolute;left:1685px;top:357px;width:527px;height:139px;box-sizing:border-box;border:4px solid #D3D6DD;border-radius:19px;overflow:hidden;background:#fff;"><div style="position:absolute;left:0;top:0;right:0;height:42px;background:#F0F1F4;border-bottom:2px solid #DDE0E5;"></div><div style="position:absolute;left:0;top:90px;right:0;height:41px;background:#E8F6EF;"></div></div>
<svg style="position:absolute;left:1702.3px;top:370.8px;" width="22" height="22" viewBox="0 0 22 22"><rect x="0" y="0" width="22" height="22" rx="2" fill="#030615"/>
<rect x="2.5" y="2.2" width="17.2" height="3.9" fill="#F0F1F4"/>
<rect x="2.6" y="8.8" width="4.3" height="4" fill="#F0F1F4"/><rect x="9" y="8.8" width="4.2" height="4" fill="#F0F1F4"/><rect x="15" y="8.8" width="4.8" height="4" fill="#F0F1F4"/>
<rect x="2.6" y="14.8" width="4.3" height="4.6" fill="#F0F1F4"/><rect x="9" y="14.8" width="4.2" height="4.6" fill="#F0F1F4"/><rect x="15" y="14.8" width="4.8" height="4.6" fill="#F0F1F4"/></svg>
<div class="t" style="left:1733.50px;top:371.90px;font-size:24.6px;line-height:24.6px;font-family:'Liberation Mono', monospace;font-weight:400;color:#030615;-webkit-text-stroke:0.5px #030615;">a_b_c_for_sales</div>
<div class="t" style="left:1702.00px;top:417.40px;font-size:22.2px;line-height:22.2px;font-family:'Liberation Sans', sans-serif;font-weight:400;color:#6B7489;">No description</div>
<div class="t" style="left:1702.00px;top:461.10px;font-size:22.4px;line-height:22.4px;font-family:'Liberation Sans', sans-serif;font-weight:400;color:#2F7D52;">Materialized</div>
<div class="t" style="right:687.50px;top:461.25px;font-size:22.1px;line-height:22.1px;font-family:'Liberation Sans', sans-serif;font-weight:400;color:#2B2E8C;">Mar 2, 11:56 PM</div>
<div style="position:absolute;left:2156.2px;top:511px;width:55.8px;height:41.5px;box-sizing:border-box;background:#EFF0F3;border-radius:16px;"></div>
<svg style="position:absolute;left:2169.7px;top:522px;" width="30" height="20" viewBox="0 0 30 20"><rect x="1.5" y="1.5" width="26" height="17" rx="4" stroke="#030615" stroke-width="2" fill="none"/>
<text x="14.4" y="14.4" text-anchor="middle" font-family="Liberation Sans, sans-serif" font-weight="700" font-size="11" fill="#030615" stroke="#030615" stroke-width="0.35">CSV</text></svg>
<div style="position:absolute;left:1685px;top:739px;width:527px;height:139px;box-sizing:border-box;border:4px solid #D3D6DD;border-radius:19px;overflow:hidden;background:#fff;"><div style="position:absolute;left:0;top:0;right:0;height:42px;background:#F0F1F4;border-bottom:2px solid #DDE0E5;"></div><div style="position:absolute;left:0;top:90px;right:0;height:41px;background:#E8F6EF;"></div></div>
<svg style="position:absolute;left:1702.3px;top:752.8px;" width="22" height="22" viewBox="0 0 22 22"><rect x="0" y="0" width="22" height="22" rx="2" fill="#030615"/>
<rect x="2.5" y="2.2" width="17.2" height="3.9" fill="#F0F1F4"/>
<rect x="2.6" y="8.8" width="4.3" height="4" fill="#F0F1F4"/><rect x="9" y="8.8" width="4.2" height="4" fill="#F0F1F4"/><rect x="15" y="8.8" width="4.8" height="4" fill="#F0F1F4"/>
<rect x="2.6" y="14.8" width="4.3" height="4.6" fill="#F0F1F4"/><rect x="9" y="14.8" width="4.2" height="4.6" fill="#F0F1F4"/><rect x="15" y="14.8" width="4.8" height="4.6" fill="#F0F1F4"/></svg>
<div class="t" style="left:1733.50px;top:753.90px;font-size:24.6px;line-height:24.6px;font-family:'Liberation Mono', monospace;font-weight:400;color:#030615;-webkit-text-stroke:0.5px #030615;">summary_stats_1</div>
<div class="t" style="left:1702.00px;top:799.40px;font-size:22.2px;line-height:22.2px;font-family:'Liberation Sans', sans-serif;font-weight:400;color:#6B7489;">No description</div>
<div class="t" style="left:1702.00px;top:843.10px;font-size:22.4px;line-height:22.4px;font-family:'Liberation Sans', sans-serif;font-weight:400;color:#2F7D52;">Materialized</div>
<div class="t" style="right:687.50px;top:843.25px;font-size:22.1px;line-height:22.1px;font-family:'Liberation Sans', sans-serif;font-weight:400;color:#2B2E8C;">Mar 2, 11:56 PM</div>
<div style="position:absolute;left:2059.5px;top:893px;width:152.5px;height:41.5px;box-sizing:border-box;background:#EFF0F3;border-radius:16px;"></div>
<svg style="position:absolute;left:2076.3px;top:902px;" width="24" height="24" viewBox="0 0 24 24"><path d="M1.8,6 V1.5 L21.8,7 V21.5 H17.8" stroke="#E8C44D" stroke-width="1.2" fill="none"/>
<rect x="0.2" y="12" width="3" height="6" rx="1.5" fill="#E8C44D"/>
<rect x="4.3" y="10.5" width="3.2" height="9" rx="1.6" fill="#E8C44D"/>
<rect x="8.5" y="9.5" width="3.2" height="11.5" rx="1.6" fill="#E8C44D"/>
<rect x="12.6" y="7.5" width="3.2" height="15" rx="1.6" fill="#E8C44D"/></svg>
<div class="t" style="left:2109.00px;top:903.65px;font-size:20.5px;line-height:20.5px;font-family:'Liberation Sans', sans-serif;font-weight:700;color:#030615;">Power BI</div>
<div style="position:absolute;left:1685px;top:1041px;width:527px;height:139px;box-sizing:border-box;border:4px solid #D3D6DD;border-radius:19px;overflow:hidden;background:#fff;"><div style="position:absolute;left:0;top:0;right:0;height:42px;background:#F0F1F4;border-bottom:2px solid #DDE0E5;"></div><div style="position:absolute;left:0;top:90px;right:0;height:41px;background:#E8F6EF;"></div></div>
<svg style="position:absolute;left:1702.3px;top:1054.8px;" width="22" height="22" viewBox="0 0 22 22"><rect x="0" y="0" width="22" height="22" rx="2" fill="#030615"/>
<rect x="2.5" y="2.2" width="17.2" height="3.9" fill="#F0F1F4"/>
<rect x="2.6" y="8.8" width="4.3" height="4" fill="#F0F1F4"/><rect x="9" y="8.8" width="4.2" height="4" fill="#F0F1F4"/><rect x="15" y="8.8" width="4.8" height="4" fill="#F0F1F4"/>
<rect x="2.6" y="14.8" width="4.3" height="4.6" fill="#F0F1F4"/><rect x="9" y="14.8" width="4.2" height="4.6" fill="#F0F1F4"/><rect x="15" y="14.8" width="4.8" height="4.6" fill="#F0F1F4"/></svg>
<div class="t" style="left:1733.50px;top:1055.90px;font-size:24.6px;line-height:24.6px;font-family:'Liberation Mono', monospace;font-weight:400;color:#030615;-webkit-text-stroke:0.5px #030615;">b_c_for_sales</div>
<div class="t" style="left:1702.00px;top:1101.40px;font-size:22.2px;line-height:22.2px;font-family:'Liberation Sans', sans-serif;font-weight:400;color:#6B7489;">No description</div>
<div class="t" style="left:1702.00px;top:1145.10px;font-size:22.4px;line-height:22.4px;font-family:'Liberation Sans', sans-serif;font-weight:400;color:#2F7D52;">Materialized</div>
<div class="t" style="right:687.50px;top:1145.25px;font-size:22.1px;line-height:22.1px;font-family:'Liberation Sans', sans-serif;font-weight:400;color:#2B2E8C;">Mar 2, 11:56 PM</div>
<div style="position:absolute;left:2156.2px;top:1195px;width:55.8px;height:41.5px;box-sizing:border-box;background:#EFF0F3;border-radius:16px;"></div>
<svg style="position:absolute;left:2169.7px;top:1206px;" width="30" height="20" viewBox="0 0 30 20"><rect x="1.5" y="1.5" width="26" height="17" rx="4" stroke="#030615" stroke-width="2" fill="none"/>
<text x="14.4" y="14.4" text-anchor="middle" font-family="Liberation Sans, sans-serif" font-weight="700" font-size="11" fill="#030615" stroke="#030615" stroke-width="0.35">CSV</text></svg>
<div style="position:absolute;left:1685px;top:1344px;width:527px;height:139px;box-sizing:border-box;border:4px solid #D3D6DD;border-radius:19px;overflow:hidden;background:#fff;"><div style="position:absolute;left:0;top:0;right:0;height:42px;background:#F0F1F4;border-bottom:2px solid #DDE0E5;"></div><div style="position:absolute;left:0;top:90px;right:0;height:41px;background:#E8F6EF;"></div></div>
<svg style="position:absolute;left:1702.3px;top:1357.8px;" width="22" height="22" viewBox="0 0 22 22"><rect x="0" y="0" width="22" height="22" rx="2" fill="#030615"/>
<rect x="2.5" y="2.2" width="17.2" height="3.9" fill="#F0F1F4"/>
<rect x="2.6" y="8.8" width="4.3" height="4" fill="#F0F1F4"/><rect x="9" y="8.8" width="4.2" height="4" fill="#F0F1F4"/><rect x="15" y="8.8" width="4.8" height="4" fill="#F0F1F4"/>
<rect x="2.6" y="14.8" width="4.3" height="4.6" fill="#F0F1F4"/><rect x="9" y="14.8" width="4.2" height="4.6" fill="#F0F1F4"/><rect x="15" y="14.8" width="4.8" height="4.6" fill="#F0F1F4"/></svg>
<div class="t" style="left:1733.50px;top:1358.90px;font-size:24.6px;line-height:24.6px;font-family:'Liberation Mono', monospace;font-weight:400;color:#030615;-webkit-text-stroke:0.5px #030615;">summary_stats_2</div>
<div class="t" style="left:1702.00px;top:1404.40px;font-size:22.2px;line-height:22.2px;font-family:'Liberation Sans', sans-serif;font-weight:400;color:#6B7489;">No description</div>
<div class="t" style="left:1702.00px;top:1448.10px;font-size:22.4px;line-height:22.4px;font-family:'Liberation Sans', sans-serif;font-weight:400;color:#2F7D52;">Materialized</div>
<div class="t" style="right:687.50px;top:1448.25px;font-size:22.1px;line-height:22.1px;font-family:'Liberation Sans', sans-serif;font-weight:400;color:#2B2E8C;">Mar 2, 11:56 PM</div>
<div style="position:absolute;left:2059.5px;top:1498px;width:152.5px;height:41.5px;box-sizing:border-box;background:#EFF0F3;border-radius:16px;"></div>
<svg style="position:absolute;left:2076.3px;top:1507px;" width="24" height="24" viewBox="0 0 24 24"><path d="M1.8,6 V1.5 L21.8,7 V21.5 H17.8" stroke="#E8C44D" stroke-width="1.2" fill="none"/>
<rect x="0.2" y="12" width="3" height="6" rx="1.5" fill="#E8C44D"/>
<rect x="4.3" y="10.5" width="3.2" height="9" rx="1.6" fill="#E8C44D"/>
<rect x="8.5" y="9.5" width="3.2" height="11.5" rx="1.6" fill="#E8C44D"/>
<rect x="12.6" y="7.5" width="3.2" height="15" rx="1.6" fill="#E8C44D"/></svg>
<div class="t" style="left:2109.00px;top:1508.65px;font-size:20.5px;line-height:20.5px;font-family:'Liberation Sans', sans-serif;font-weight:700;color:#030615;">Power BI</div>
<div style="position:absolute;left:2794px;top:962px;width:64px;height:407px;box-sizing:border-box;border:2px solid #C6CAD2;border-radius:16px;background:#fff;"></div>
<div style="position:absolute;left:2796px;top:1023px;width:60px;height:2px;box-sizing:border-box;background:#C6CAD2;"></div>
<div style="position:absolute;left:2796px;top:1306px;width:60px;height:2px;box-sizing:border-box;background:#C6CAD2;"></div>
<svg style="position:absolute;left:2810px;top:977px;" width="32" height="32" viewBox="0 0 32 32"><circle cx="13.5" cy="13.5" r="8.5" stroke="#030615" stroke-width="2.8" fill="none"/><path d="M19.5,19.5 L27,27" stroke="#030615" stroke-width="3"/><path d="M13.5,9.5 V17.5 M9.5,13.5 H17.5" stroke="#030615" stroke-width="2.6"/></svg>
<div style="position:absolute;left:2816px;top:1049.5px;width:17px;height:232px;box-sizing:border-box;background:#C3C7CF;border-radius:5px;"></div>
<div style="position:absolute;left:2806px;top:1103.5px;width:36px;height:36px;box-sizing:border-box;border:4px solid #6B7489;border-radius:50%;background:#EBECEF;"></div>
<svg style="position:absolute;left:2810px;top:1322px;" width="32" height="32" viewBox="0 0 32 32"><circle cx="13.5" cy="13.5" r="8.5" stroke="#030615" stroke-width="2.8" fill="none"/><path d="M19.5,19.5 L27,27" stroke="#030615" stroke-width="3"/><path d="M9.5,13.5 H17.5" stroke="#030615" stroke-width="2.6"/></svg>
<div style="position:absolute;left:2794px;top:1386.5px;width:64px;height:62px;box-sizing:border-box;border:2px solid #C6CAD2;border-radius:16px;background:#fff;"></div>
<svg style="position:absolute;left:2810px;top:1401px;" width="32" height="32" viewBox="0 0 32 32"><path d="M25.27,13.93 L28.08,14.30 L28.08,17.70 L25.27,18.07 L24.02,21.09 L25.75,23.34 L23.34,25.75 L21.09,24.02 L18.07,25.27 L17.70,28.08 L14.30,28.08 L13.93,25.27 L10.91,24.02 L8.66,25.75 L6.25,23.34 L7.98,21.09 L6.73,18.07 L3.92,17.70 L3.92,14.30 L6.73,13.93 L7.98,10.91 L6.25,8.66 L8.66,6.25 L10.91,7.98 L13.93,6.73 L14.30,3.92 L17.70,3.92 L18.07,6.73 L21.09,7.98 L23.34,6.25 L25.75,8.66 L24.02,10.91 Z" stroke="#030615" stroke-width="2.6" fill="none" stroke-linejoin="round"/><circle cx="16" cy="16" r="4.2" stroke="#030615" stroke-width="2.6" fill="none"/></svg>
<div style="position:absolute;left:2794px;top:1466px;width:64px;height:63px;box-sizing:border-box;border:2px solid #C6CAD2;border-radius:16px;background:#fff;"></div>
<svg style="position:absolute;left:2810px;top:1481px;" width="32" height="32" viewBox="0 0 32 32"><circle cx="16" cy="16" r="12.5" stroke="#030615" stroke-width="2.8" fill="none"/><path d="M16,8 V15.5" stroke="#030615" stroke-width="2.8"/><path d="M10.5,13.5 L21.5,13.5 L16,19.5 Z" fill="#030615"/><path d="M10,22 H22" stroke="#030615" stroke-width="2.8"/></svg>
<div style="position:absolute;left:0px;top:1462px;width:2878px;height:92px;box-sizing:border-box;background:linear-gradient(to bottom, rgba(0,0,0,0), rgba(0,0,0,0.03) 45%, rgba(0,0,0,0.105));"></div>
<div style="position:absolute;left:0px;top:1462px;width:400px;height:92px;box-sizing:border-box;background:linear-gradient(to right, rgba(255,255,255,0.75), rgba(255,255,255,0) 100%);"></div>
<svg style="position:absolute;left:0px;top:1536px;" width="18" height="18" viewBox="0 0 18 18"><path d="M0,0 L0,18 L18,18 A18,18 0 0 1 0,0 Z" fill="#7D7A52"/></svg>
<svg style="position:absolute;left:2864px;top:1536px;" width="18" height="18" viewBox="0 0 18 18"><path d="M18,0 L18,18 L0,18 A18,18 0 0 0 18,0 Z" fill="#4E5A42"/></svg>
</body></html>
